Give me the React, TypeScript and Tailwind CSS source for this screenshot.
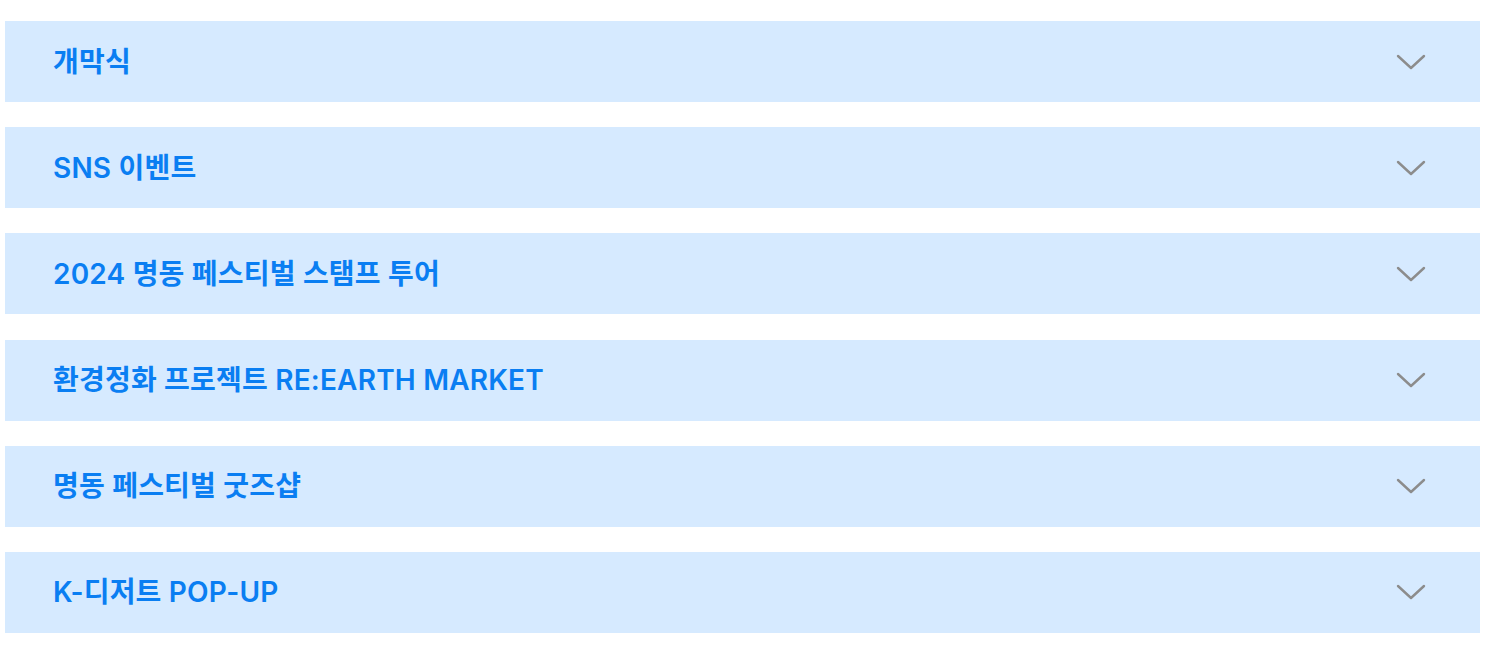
const items = [
  "개막식",
  "SNS 이벤트",
  "2024 명동 페스티벌 스탬프 투어",
  "환경정화 프로젝트 RE:EARTH MARKET",
  "명동 페스티벌 굿즈샵",
  "K-디저트 POP-UP",
];

function Chevron() {
  return (
    <svg width="30" height="16" viewBox="0 0 30 16" fill="none" className="shrink-0">
      <path d="M2 2 L15 14 L28 2" stroke="#8c8c8c" strokeWidth="2.4" strokeLinecap="round" strokeLinejoin="round" />
    </svg>
  );
}

export default function App() {
  return (
    <div className="min-h-screen bg-white pt-[21px]">
      <div
        className="ml-[5px] flex w-[1475px] flex-col gap-[25.2px]"
        style={{ fontFamily: 'Inter, "Noto Sans CJK KR", sans-serif' }}
      >
        {items.map((title) => (
          <button
            key={title}
            className="flex h-[81px] w-full items-center justify-between bg-[#d6eaff] pl-[48px] pr-[54px] text-left"
          >
            <span className="text-[28px] font-semibold tracking-[0.2px] text-[#0a7ef2]">{title}</span>
            <Chevron />
          </button>
        ))}
      </div>
    </div>
  );
}
